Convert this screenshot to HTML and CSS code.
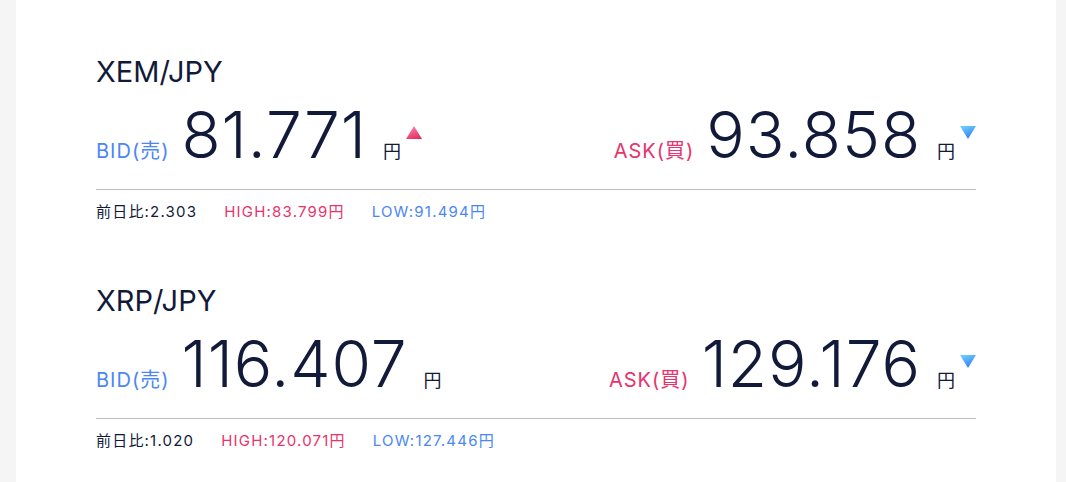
FILE: index.html
```html
<!DOCTYPE html>
<html lang="ja">
<head>
    <meta charset="UTF-8">
    <meta name="viewport" content="width=device-width, initial-scale=1.0">
    <title>Rates</title>
    <link rel="stylesheet" href="styles.css">
</head>
<body>
    <div class="container">
        <!-- XEM -->
        <section class="rate">
            <h2 class="pair">XEM/JPY</h2>
            <div class="prices">
                <div class="price">
                    <span class="label bid">BID(売)</span>
                    <span class="value">81.771</span>
                    <span class="yen">円</span>
                    <span class="arrow up"></span>
                </div>
                <div class="price">
                    <span class="label ask">ASK(買)</span>
                    <span class="value">93.858</span>
                    <span class="yen">円</span>
                    <span class="arrow down"></span>
                </div>
            </div>
            <div class="stats">
                <span class="diff">前日比:2.303</span>
                <span class="high">HIGH:83.799円</span>
                <span class="low">LOW:91.494円</span>
            </div>
        </section>

        <!-- XRP -->
        <section class="rate">
            <h2 class="pair">XRP/JPY</h2>
            <div class="prices">
                <div class="price">
                    <span class="label bid">BID(売)</span>
                    <span class="value">116.407</span>
                    <span class="yen">円</span>
                    <span class="arrow none"></span>
                </div>
                <div class="price">
                    <span class="label ask">ASK(買)</span>
                    <span class="value">129.176</span>
                    <span class="yen">円</span>
                    <span class="arrow down"></span>
                </div>
            </div>
            <div class="stats">
                <span class="diff">前日比:1.020</span>
                <span class="high">HIGH:120.071円</span>
                <span class="low">LOW:127.446円</span>
            </div>
        </section>
    </div>
</body>
</html>
```
FILE: styles.css
```css
body {
    margin: 0;
    padding: 0;
    background-color: #f5f5f5;
    color: #121a3a;
    font-family: 'Inter', 'Noto Sans CJK JP', sans-serif;
}
.container {
    margin: 0 10px 0 16px;
    background-color: #fff;
    padding: 52px 80px 0;
    min-height: 482px;
    box-sizing: border-box;
}
.rate {
    margin-bottom: 59px;
}
.pair {
    margin: 0;
    font-size: 29px;
    font-weight: 400;
    line-height: 40px;
}
.prices {
    display: flex;
    justify-content: space-between;
    align-items: baseline;
    border-bottom: 1px solid #bdbdbd;
    padding: 10px 0 21px;
    height: 66px;
}
.price {
    display: flex;
    align-items: baseline;
}
.label {
    font-size: 20px;
    letter-spacing: 1px;
    margin-right: 12px;
}
.bid {
    color: #4a87f5;
}
.ask {
    color: #e8336b;
}
.value {
    font-size: 64px;
    font-weight: 300;
    line-height: 66px;
    letter-spacing: 1px;
}
.yen {
    font-size: 18px;
    margin-left: 16px;
}
.arrow {
    width: 16px;
    height: 13px;
    margin: 24px 0 0 5px;
    align-self: flex-start;
}
.arrow.up {
    background: linear-gradient(160deg, #ff8fb0, #e0235a);
    clip-path: polygon(50% 0, 100% 100%, 0 100%);
}
.arrow.down {
    background: linear-gradient(160deg, #6fd6ff, #2f6df0);
    clip-path: polygon(0 0, 100% 0, 50% 100%);
}
.arrow.none {
    visibility: hidden;
}
.stats {
    display: flex;
    gap: 27px;
    font-size: 15px;
    line-height: 20px;
    padding-top: 12px;
    letter-spacing: 1.2px;
}
.high {
    color: #e8336b;
}
.low {
    color: #4a87f5;
}
```
